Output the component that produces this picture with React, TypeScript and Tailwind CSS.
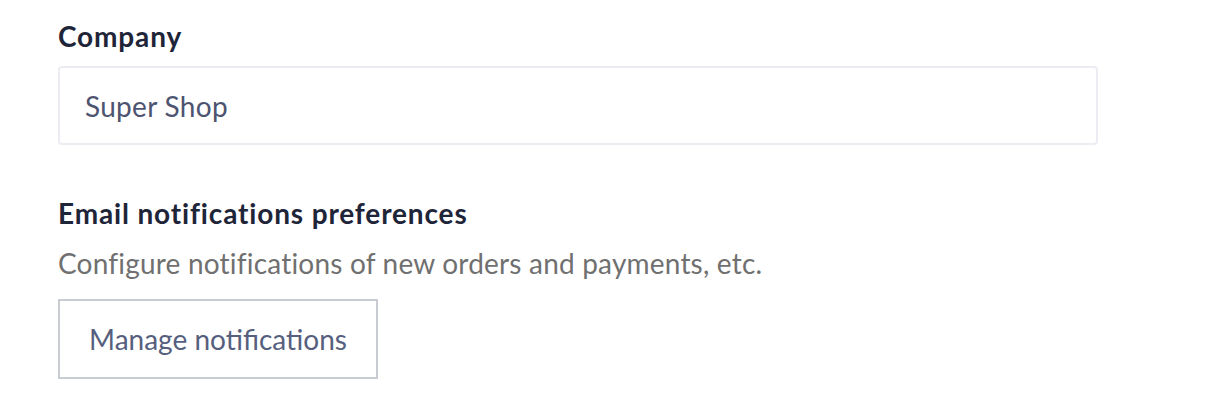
export default function App() {
  return (
    <div className="w-[1220px] h-[412px] bg-white pl-[58px] pt-[19px]" style={{ fontFamily: "Lato, 'Noto Sans', sans-serif" }}>
      <div className="w-[1040px]">
        <label className="block text-[28px] leading-[34px] font-bold tracking-[0.85px] text-[#1f2539]">Company</label>
        <div className="mt-[13px] h-[79px] border-2 border-[#ececf2] rounded-[4px] flex items-center pl-[25px] text-[28px] tracking-[0.3px] text-[#4d5470]">
          Super Shop
        </div>
        <div className="mt-[51px] text-[28px] leading-[34px] font-bold tracking-[0.85px] text-[#1f2539]">Email notifications preferences</div>
        <div className="mt-[16px] text-[28px] leading-[34px] tracking-[0.2px] text-[#707070]">Configure notifications of new orders and payments, etc.</div>
        <button className="mt-[19px] w-[320px] h-[80px] border-2 border-[#c9cdd3] text-[28px] text-[#56607e] bg-white">
          Manage notifications
        </button>
      </div>
    </div>
  );
}
